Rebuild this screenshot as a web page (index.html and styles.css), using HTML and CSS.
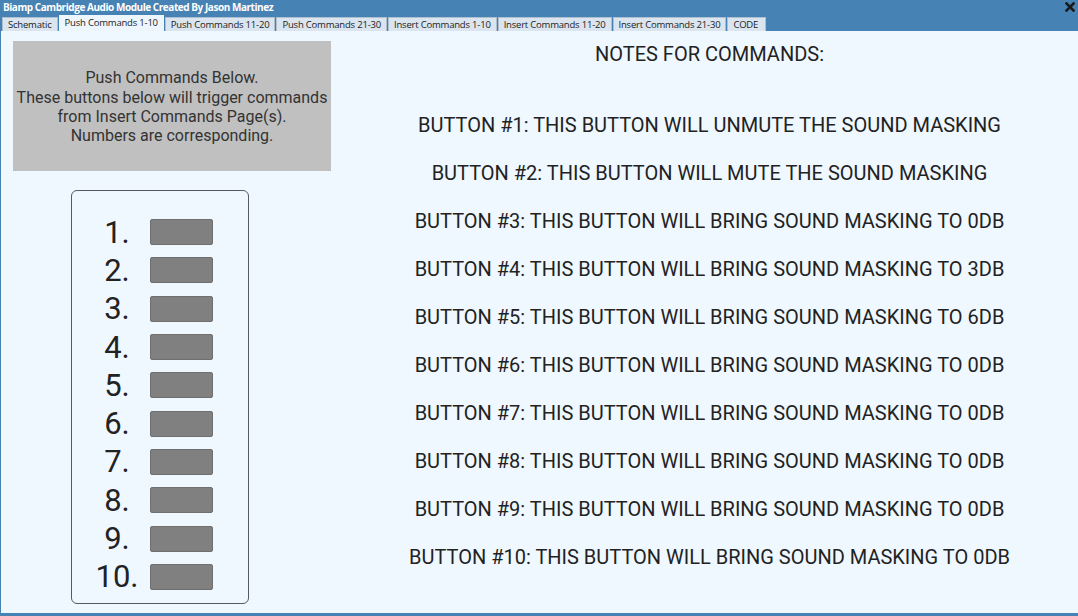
FILE: index.html
```html
<!DOCTYPE html>
<html>
<head>
<meta charset="utf-8">
<link rel="stylesheet" href="styles.css">
</head>
<body>
<div class="window">
  <div class="titlebar">
    <span class="title">Biamp Cambridge Audio Module Created By Jason Martinez</span>
    <svg class="close" width="10" height="10" viewBox="0 0 10 10"><path d="M1.5 1.5 L8.5 8.5 M8.5 1.5 L1.5 8.5" stroke="#1a1a1a" stroke-width="2.6" stroke-linecap="square"/></svg>
  </div>
  <div class="tabs">
    <div class="tab">Schematic</div>
    <div class="tab active">Push Commands 1-10</div>
    <div class="tab">Push Commands 11-20</div>
    <div class="tab">Push Commands 21-30</div>
    <div class="tab">Insert Commands 1-10</div>
    <div class="tab">Insert Commands 11-20</div>
    <div class="tab">Insert Commands 21-30</div>
    <div class="tab code">CODE</div>
  </div>
  <div class="content">
    <div class="left">
      <div class="infobox">
        Push Commands Below.<br>
        These buttons below will trigger commands<br>
        from Insert Commands Page(s).<br>
        Numbers are corresponding.
      </div>
      <div class="numbox">
        <div class="row"><span class="num">1.</span><span class="btn"></span></div>
        <div class="row"><span class="num">2.</span><span class="btn"></span></div>
        <div class="row"><span class="num">3.</span><span class="btn"></span></div>
        <div class="row"><span class="num">4.</span><span class="btn"></span></div>
        <div class="row"><span class="num">5.</span><span class="btn"></span></div>
        <div class="row"><span class="num">6.</span><span class="btn"></span></div>
        <div class="row"><span class="num">7.</span><span class="btn"></span></div>
        <div class="row"><span class="num">8.</span><span class="btn"></span></div>
        <div class="row"><span class="num">9.</span><span class="btn"></span></div>
        <div class="row"><span class="num">10.</span><span class="btn"></span></div>
      </div>
    </div>
    <div class="notes">
      <div class="heading">NOTES FOR COMMANDS:</div>
      <div class="list">
        <div class="note">BUTTON #1: THIS BUTTON WILL UNMUTE THE SOUND MASKING</div>
        <div class="note">BUTTON #2: THIS BUTTON WILL MUTE THE SOUND MASKING</div>
        <div class="note">BUTTON #3: THIS BUTTON WILL BRING SOUND MASKING TO 0DB</div>
        <div class="note">BUTTON #4: THIS BUTTON WILL BRING SOUND MASKING TO 3DB</div>
        <div class="note">BUTTON #5: THIS BUTTON WILL BRING SOUND MASKING TO 6DB</div>
        <div class="note">BUTTON #6: THIS BUTTON WILL BRING SOUND MASKING TO 0DB</div>
        <div class="note">BUTTON #7: THIS BUTTON WILL BRING SOUND MASKING TO 0DB</div>
        <div class="note">BUTTON #8: THIS BUTTON WILL BRING SOUND MASKING TO 0DB</div>
        <div class="note">BUTTON #9: THIS BUTTON WILL BRING SOUND MASKING TO 0DB</div>
        <div class="note">BUTTON #10: THIS BUTTON WILL BRING SOUND MASKING TO 0DB</div>
      </div>
    </div>
  </div>
</div>
</body>
</html>
```
FILE: styles.css
```css
html, body {
  margin: 0;
  padding: 0;
  width: 1078px;
  height: 616px;
  overflow: hidden;
  background: #4682b4;
}
.window {
  width: 1078px;
  height: 616px;
  display: flex;
  flex-direction: column;
  background: #4682b4;
}
.titlebar {
  height: 15px;
  display: flex;
  align-items: center;
  justify-content: space-between;
  padding: 0 3px 0 3px;
}
.title {
  font-family: "Open Sans", "DejaVu Sans", sans-serif;
  font-weight: 700;
  font-size: 10px;
  color: #ffffff;
  letter-spacing: -0.45px;
  line-height: 15px;
}
.close {
  margin-top: -2px;
}
.tabs {
  height: 16px;
  display: flex;
  align-items: flex-end;
  padding-left: 2px;
  gap: 1px;
}
.tab {
  height: 14px;
  box-sizing: border-box;
  padding: 0 5px;
  background: #dbe5ef;
  border: 1px solid #aebfd0;
  border-bottom: none;
  font-family: "Open Sans", "DejaVu Sans", sans-serif;
  font-size: 9.5px;
  line-height: 13px;
  color: #222;
  letter-spacing: -0.2px;
}
.tab.active {
  height: 16px;
  background: #eef6fd;
  line-height: 14px;
  border-color: #eef6fd;
}
.tab.code {
  width: 39px;
  padding-left: 5px;
}
.content {
  flex: 1;
  background: #eff7ff;
  margin-left: 1px;
  margin-bottom: 3px;
  display: flex;
}
.left {
  width: 340px;
  display: flex;
  flex-direction: column;
  align-items: flex-start;
  padding: 10px 0 0 12px;
  box-sizing: border-box;
}
.infobox {
  width: 318px;
  height: 130px;
  background: #c0c0c0;
  font-family: Roboto, "Liberation Sans", sans-serif;
  font-size: 16px;
  line-height: 19.4px;
  color: #333;
  text-align: center;
  display: flex;
  align-items: center;
  justify-content: center;
  padding-top: 2px;
  box-sizing: border-box;
}
.numbox {
  margin-top: 19px;
  margin-left: 58px;
  width: 178px;
  height: 414px;
  box-sizing: border-box;
  border: 1px solid #555a60;
  border-radius: 6px;
  padding: 22px 0 0 15px;
  display: flex;
  flex-direction: column;
}
.row {
  height: 38.3px;
  display: flex;
  align-items: center;
}
.num {
  width: 60px;
  text-align: center;
  font-family: Roboto, "Liberation Sans", sans-serif;
  font-size: 31px;
  color: #222;
}
.btn {
  margin-left: 3px;
  width: 63px;
  height: 26px;
  box-sizing: border-box;
  background: #808080;
  border: 1px solid #6f6f6f;
  border-radius: 2px;
}
.notes {
  flex: 1;
  display: flex;
  flex-direction: column;
  align-items: center;
  font-family: Roboto, "Liberation Sans", sans-serif;
  color: #222;
}
.heading {
  font-size: 20px;
  margin-top: 11px;
  line-height: 24px;
}
.list {
  margin-top: 47px;
  display: flex;
  flex-direction: column;
  align-items: center;
}
.note {
  font-size: 20px;
  line-height: 24px;
  height: 48px;
}
```
